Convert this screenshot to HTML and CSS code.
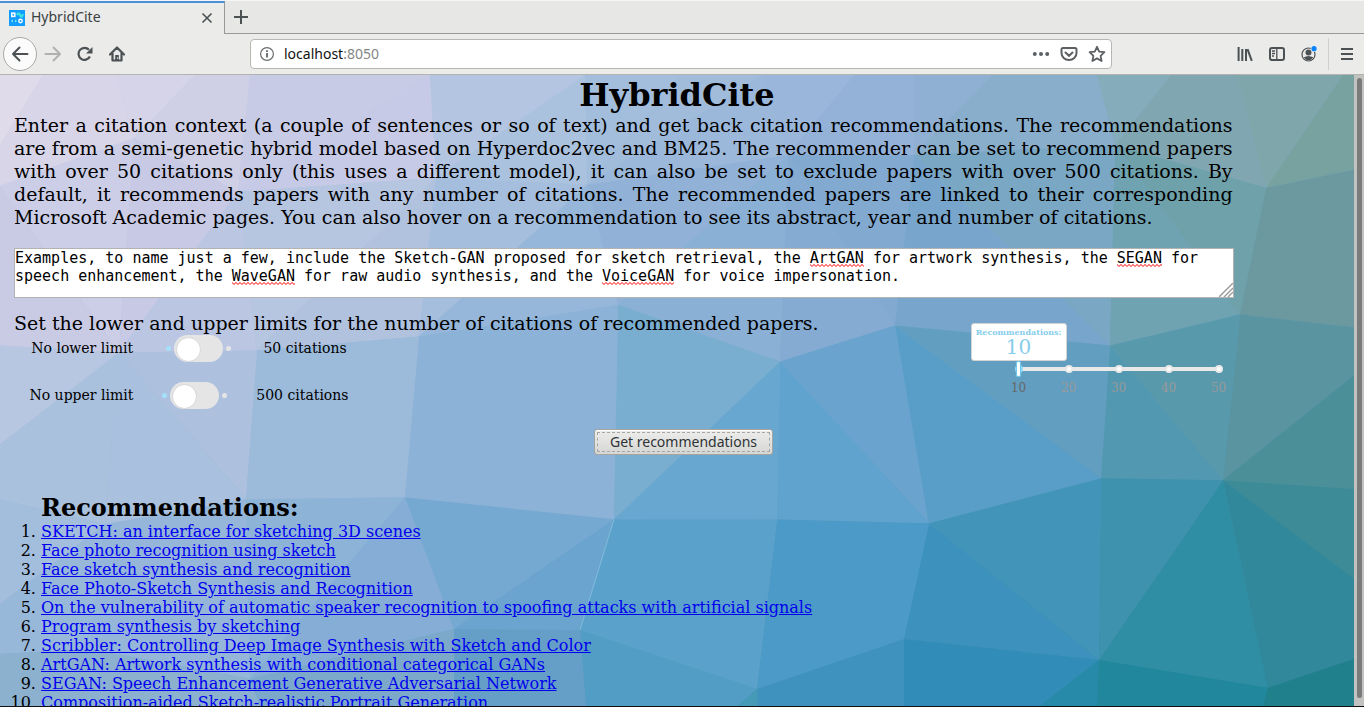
FILE: index.html
```html
<!DOCTYPE html>
<html lang="en">
<head>
<meta charset="utf-8">
<title>HybridCite</title>
<link rel="stylesheet" href="styles.css">
</head>
<body>
<div class="browser">
  <header class="chrome">
    <div class="tabs">
      <div class="tab">
        <svg class="favicon" viewBox="0 0 16 16" width="16" height="16"><rect width="16" height="16" fill="#119dff"/><rect x="2.8" y="3.2" width="3" height="3.2" fill="none" stroke="#fff" stroke-width="1.5"/><path d="M8 5q1.500-3.500 3 0t3-.8" fill="none" stroke="#3ee0dc" stroke-width="2.200"/><path d="M2 11l2-1.500v3zM8 11l-2-1.500v3z" fill="#7fe8ec"/><circle cx="11.500" cy="11" r="1.700" fill="none" stroke="#fff" stroke-width="1.400"/></svg>
        <span class="tab-title">HybridCite</span>
        <button class="icon-button small" aria-label="Close tab"><svg width="12" height="12" viewBox="0 0 12 12"><path d="M1.500 1.500l9 9M10.500 1.500l-9 9" stroke="#4c5154" stroke-width="1.600" fill="none"/></svg></button>
      </div>
      <div class="tab-rest"><button class="icon-button small" aria-label="New tab"><svg width="14" height="14" viewBox="0 0 14 14"><path d="M7 0v14M0 7h14" stroke="#4c5154" stroke-width="2"/></svg></button></div>
    </div>
    <nav class="toolbar">
      <button class="back" aria-label="Back"><svg width="18" height="16" viewBox="0 0 18 16"><path d="M8.500 1.500L2 8l6.500 6.500M2 8h14.500" fill="none" stroke="#4c5154" stroke-width="2" stroke-linejoin="round" stroke-linecap="round"/></svg></button>
      <button class="icon-button" aria-label="Forward"><svg width="18" height="16" viewBox="0 0 18 16"><path d="M9.500 1.500L16 8l-6.500 6.500M16 8H1.500" fill="none" stroke="#b0b2b2" stroke-width="2" stroke-linejoin="round" stroke-linecap="round"/></svg></button>
      <button class="icon-button" aria-label="Reload"><svg width="16" height="16" viewBox="0 0 16 16"><path d="M12.900 10.500A6 6 0 1 1 12 3.800" fill="none" stroke="#4c5154" stroke-width="2.200"/><path d="M15.500 1v6.500H9z" fill="#4c5154"/></svg></button>
      <button class="icon-button" aria-label="Home"><svg width="16" height="16" viewBox="0 0 16 16"><path d="M1 8.500L8 1.500l7 7M3.500 7.500v7h9v-7" fill="none" stroke="#4c5154" stroke-width="2.200" stroke-linejoin="round" stroke-linecap="round"/><path d="M6.200 9h3.600v6H6.200z" fill="#4c5154"/><circle cx="8.600" cy="12" r=".8" fill="#eee"/></svg></button>
      <div class="address">
        <svg width="16" height="16" viewBox="0 0 16 16"><circle cx="8" cy="8" r="6.400" fill="none" stroke="#6b6e70" stroke-width="1.200"/><path d="M8 7v4.500M8 4.200v1.700" stroke="#6b6e70" stroke-width="1.900"/></svg>
        <span class="url">localhost<span class="port">:8050</span></span>
        <svg width="18" height="16" viewBox="0 0 18 16" fill="#5c6063"><circle cx="2.800" cy="8" r="2"/><circle cx="9" cy="8" r="2"/><circle cx="15.200" cy="8" r="2"/></svg>
        <svg width="18" height="16" viewBox="0 0 18 16"><path d="M3 2h12q1.500 0 1.500 1.500V7a7.500 7 0 0 1-15 0V3.500Q1.500 2 3 2z" fill="none" stroke="#5c6063" stroke-width="2"/><path d="M5.500 6.500L9 9.800l3.500-3.300" fill="none" stroke="#5c6063" stroke-width="2" stroke-linecap="round"/></svg>
        <svg width="18" height="18" viewBox="0 0 18 18"><path d="M9 1.800l2.200 4.800 5.200.6-3.800 3.600 1 5.200L9 13.400 4.400 16l1-5.200L1.600 7.200l5.200-.6z" fill="none" stroke="#5c6063" stroke-width="1.800" stroke-linejoin="round"/></svg>
      </div>
      <button class="icon-button" aria-label="Library"><svg width="16" height="16" viewBox="0 0 16 16"><path d="M1.600 1v14M5.300 3v12M9 3v12M10.500 3.200l4.300 11.600" fill="none" stroke="#4c5154" stroke-width="2"/></svg></button>
      <button class="icon-button" aria-label="Sidebar"><svg width="16" height="16" viewBox="0 0 16 16"><rect x="1" y="2" width="14" height="12" rx="2" fill="none" stroke="#4c5154" stroke-width="2"/><path d="M7.800 2v12M3 5h3M3 7.500h3M3 10h2" stroke="#4c5154" stroke-width="1.300"/></svg></button>
      <button class="icon-button account" aria-label="Account"><svg width="16" height="16" viewBox="0 0 16 16"><circle cx="7.500" cy="8.500" r="6.500" fill="none" stroke="#4c5154" stroke-width="1.200"/><circle cx="7.500" cy="6.500" r="3" fill="#4c5154"/><path d="M2.600 11.500Q7.500 8.500 12.400 11.500 7.500 17 2.600 11.500z" fill="#4c5154"/><circle cx="13" cy="2.700" r="3.300" fill="#eaeae9"/><circle cx="13" cy="2.700" r="2.600" fill="#0a84ff"/></svg></button>
      <button class="icon-button menu" aria-label="Menu"><svg width="12" height="12" viewBox="0 0 12 12"><path d="M0 1h12M0 6h12M0 11h12" stroke="#4c5154" stroke-width="2"/></svg></button>
    </nav>
  </header>

  <div class="viewport">
    <div class="page">
      <svg class="backdrop" viewBox="0 75 1354 632" preserveAspectRatio="none" aria-hidden="true">
        <defs>
          <linearGradient id="g" x1="0" y1="0" x2="1" y2="1"><stop offset="0" stop-color="#d8d5e8"/><stop offset=".5" stop-color="#7faed3"/><stop offset="1" stop-color="#20808c"/></linearGradient>
          <pattern id="wave" width="4" height="3" patternUnits="userSpaceOnUse"><path d="M-1 0L2 3 5 0" transform="translate(0 -.5)" fill="none" stroke="#f00" stroke-width="1"/></pattern>
        </defs>
        <rect y="75" width="1354" height="632" fill="url(#g)"/>
        <path fill="#dfdbea" d="M0 75H43L0 145z"/>
        <path fill="#d8d5e8" d="M43 75H115L134 138 0 186V145z"/>
        <path fill="#d6d4e8" d="M115 75H195L134 138z"/>
        <path fill="#cfcfe6" d="M195 75H250L238 192 134 138z"/>
        <path fill="#c8cbe6" d="M250 75H430L238 192z"/>
        <path fill="#c6cae6" d="M430 75L436 178 238 192z"/>
        <path fill="#cccee7" d="M0 186L134 138 119 353z"/>
        <path fill="#c8c9e4" d="M134 138L238 192 119 353z"/>
        <path fill="#c9cbe5" d="M0 186L119 353 0 346z"/>
        <path fill="#b6c5e0" d="M238 192L436 178 257 351z"/>
        <path fill="#bbc6e2" d="M238 192L119 353 257 351z"/>
        <path fill="#b1c2df" d="M436 178L257 351 419 337z"/>
        <path fill="#b3c5e0" d="M430 75H585L436 178z"/>
        <path fill="#abc2de" d="M585 75L587 185 436 178z"/>
        <path fill="#a2bedc" d="M585 75H680L587 185z"/>
        <path fill="#a1bbdb" d="M680 75H762L587 185z"/>
        <path fill="#9bb8da" d="M762 75L788 155 587 185z"/>
        <path fill="#a5bedd" d="M436 178L587 185 419 337z"/>
        <path fill="#96b7da" d="M587 185L618 305 419 337z"/>
        <path fill="#91b1d7" d="M587 185L788 155 618 305z"/>
        <path fill="#8bb0d5" d="M788 155L780 362 618 305z"/>
        <path fill="#9ab6da" d="M762 75H854L788 155z"/>
        <path fill="#94b2d8" d="M854 75H914V155H788z"/>
        <path fill="#8fb0d2" d="M914 75H992L914 155z"/>
        <path fill="#89aecb" d="M992 75H1097L1115 145 914 155z"/>
        <path fill="#84acbb" d="M1097 75H1171L1115 145z"/>
        <path fill="#80a7b1" d="M1171 75H1236L1266 188 1115 145z"/>
        <path fill="#7ea6ab" d="M1236 75H1343L1266 188z"/>
        <path fill="#78a29f" d="M1343 75H1354V170L1266 188z"/>
        <path fill="#85abd3" d="M788 155L895 326 780 362z"/>
        <path fill="#82aad1" d="M788 155H914L895 326z"/>
        <path fill="#7aa7c3" d="M914 155L1115 145 1110 346z"/>
        <path fill="#78a5cb" d="M914 155L1110 346 895 326z"/>
        <path fill="#70a3b2" d="M1115 145L1240 315 1110 346z"/>
        <path fill="#6ea1a9" d="M1115 145L1266 188 1240 315z"/>
        <path fill="#6b999f" d="M1266 188L1354 170V328L1240 315z"/>
        <path fill="#5a94a1" d="M1240 315L1354 328V376L1223 481z"/>
        <path fill="#5398b1" d="M1110 346L1223 481 1101 479z"/>
        <path fill="#5999ac" d="M1110 346L1240 315 1223 481z"/>
        <path fill="#4b8f98" d="M1354 376V490L1223 481z"/>
        <path fill="#3d8b96" d="M1223 481L1354 490V580z"/>
        <path fill="#32889b" d="M1223 481L1354 580V660L1268 689z"/>
        <path fill="#2f8da4" d="M1223 481L1268 689 1099 661z"/>
        <path fill="#3e92ad" d="M1101 479L1223 481 1099 661z"/>
        <path fill="#4294b9" d="M929 524L1101 479 1099 661z"/>
        <path fill="#3c92bd" d="M929 524L1099 661 904 640z"/>
        <path fill="#318db8" d="M904 640L1099 661 1040 707H904z"/>
        <path fill="#278aa9" d="M1099 661L1097 707H1040z"/>
        <path fill="#20879c" d="M1099 661L1268 689 1263 707H1097z"/>
        <path fill="#20808b" d="M1268 689L1354 660V707H1263z"/>
        <path fill="#3e92bd" d="M757 690L904 640V707H758z"/>
        <path fill="#4c9ac7" d="M777 520L929 524 904 640 757 690z"/>
        <path fill="#5aa1cc" d="M614 520H777L757 690 580 631z"/>
        <path fill="#529dc5" d="M580 631L757 690 738 707H586z"/>
        <path fill="#459ab8" d="M757 690L758 707H738z"/>
        <path fill="#659ec7" d="M454 630L580 631 586 707H454z"/>
        <path fill="#6aa4cf" d="M614 520L580 631 454 630z"/>
        <path fill="#76a9d2" d="M405 498L614 520 454 630z"/>
        <path fill="#85add5" d="M405 498L454 630 250 680z"/>
        <path fill="#8db4d7" d="M246 500L405 498 250 680z"/>
        <path fill="#68a7cf" d="M780 362L777 520H614z"/>
        <path fill="#79aed1" d="M618 305L780 362 614 520z"/>
        <path fill="#8cb2d7" d="M419 337L618 305 614 520 405 498z"/>
        <path fill="#9cbada" d="M257 351L419 337 405 498 246 500z"/>
        <path fill="#adc0de" d="M119 353L257 351 246 500z"/>
        <path fill="#a9c0de" d="M119 353L246 500 105 525z"/>
        <path fill="#b8c7e1" d="M0 346L119 353 0 445z"/>
        <path fill="#a9c1dd" d="M0 445L119 353 105 525 0 500z"/>
        <path fill="#a3bddd" d="M0 500L105 525 0 605z"/>
        <path fill="#98b8da" d="M105 525L0 605V655L90 650z"/>
        <path fill="#95b6d9" d="M105 525L246 500 250 680 90 650z"/>
        <path fill="#8bb1cf" d="M0 655L90 650 250 680 260 707H0z"/>
        <path fill="#7ca9ca" d="M250 680L454 630V707H260z"/>
        <path fill="#60a3ce" d="M780 362L929 524 777 520z"/>
        <path fill="#69a3ce" d="M780 362L895 326 929 524z"/>
        <path fill="#589ec8" d="M895 326L1101 479 929 524z"/>
        <path fill="#629ebf" d="M895 326L1110 346 1101 479z"/>
        <path class="glint" d="M614 520L580 631"/>
      </svg>

      <main class="content">
        <h1>HybridCite</h1>
        <div class="column">
          <p class="intro">Enter a citation context (a couple of sentences or so of text) and get back citation recommendations. The recommendations are from a semi-genetic hybrid model based on Hyperdoc2vec and BM25. The recommender can be set to recommend papers with over 50 citations only (this uses a different model), it can also be set to exclude papers with over 500 citations. By default, it recommends papers with any number of citations. The recommended papers are linked to their corresponding Microsoft Academic pages. You can also hover on a recommendation to see its abstract, year and number of citations.</p>
          <div class="editor">
            <textarea aria-label="Citation context" spellcheck="false">Examples, to name just a few, include the Sketch-GAN proposed for sketch retrieval, the ArtGAN for artwork synthesis, the SEGAN for speech enhancement, the WaveGAN for raw audio synthesis, and the VoiceGAN for voice impersonation.</textarea>
            <svg class="typo artgan"><rect width="100%" height="3" fill="url(#wave)"/></svg>
            <svg class="typo segan"><rect width="100%" height="3" fill="url(#wave)"/></svg>
            <svg class="typo wavegan"><rect width="100%" height="3" fill="url(#wave)"/></svg>
            <svg class="typo voicegan"><rect width="100%" height="3" fill="url(#wave)"/></svg>
            <svg class="grip" width="14" height="14" viewBox="0 0 14 14"><path d="M0 14L14 0M5 14l9-9M9 14l5-5" stroke="#999" stroke-width="1.400"/></svg>
          </div>
          <div class="settings">
            <section class="limits">
              <p>Set the lower and upper limits for the number of citations of recommended papers.</p>
              <div class="limit"><label for="lower">No lower limit</label><span class="switch"><input type="checkbox" id="lower"></span><label for="lower">50 citations</label></div>
              <div class="limit"><label for="upper">No upper limit</label><span class="switch"><input type="checkbox" id="upper"></span><label for="upper">500 citations</label></div>
            </section>
            <section class="amount">
              <div class="bubble"><label for="count">Recommendations:</label><output for="count">10</output></div>
              <div class="slider">
                <div class="stops"><i></i><i></i><i></i><i></i><i></i></div>
                <input type="range" id="count" min="10" max="50" step="10" value="10">
              </div>
              <div class="marks"><span class="current">10</span><span>20</span><span>30</span><span>40</span><span>50</span></div>
            </section>
          </div>
        </div>
        <div class="submit"><button class="get">Get recommendations</button></div>
        <section class="results">
          <h2>Recommendations:</h2>
          <ol>
            <li><a href="#">SKETCH: an interface for sketching 3D scenes</a></li>
            <li><a href="#">Face photo recognition using sketch</a></li>
            <li><a href="#">Face sketch synthesis and recognition</a></li>
            <li><a href="#">Face Photo-Sketch Synthesis and Recognition</a></li>
            <li><a href="#">On the vulnerability of automatic speaker recognition to spoofing attacks with artificial signals</a></li>
            <li><a href="#">Program synthesis by sketching</a></li>
            <li><a href="#">Scribbler: Controlling Deep Image Synthesis with Sketch and Color</a></li>
            <li><a href="#">ArtGAN: Artwork synthesis with conditional categorical GANs</a></li>
            <li><a href="#">SEGAN: Speech Enhancement Generative Adversarial Network</a></li>
            <li><a href="#">Composition-aided Sketch-realistic Portrait Generation.</a></li>
          </ol>
        </section>
      </main>
    </div>
    <div class="scrollbar"><div class="thumb"></div></div>
  </div>
</div>
</body>
</html>
```
FILE: styles.css
```css
* { box-sizing: border-box; }
body { margin: 0; font-family: "DejaVu Serif", serif; color: #000; }
button { font: inherit; border: 0; padding: 0; background: none; }
p, h1, h2, ol { margin: 0; padding: 0; }

.browser { height: 100vh; display: flex; flex-direction: column; overflow: hidden; border-bottom: 1px solid #111; }

/* Browser chrome */
.chrome { background: #ebebea; font-family: "Noto Sans", sans-serif; font-size: 14px; color: #3a3f42; border-bottom: 1px solid #b3b3b0; border-top: 1px solid #f6f6f6; }
.tabs { display: flex; height: 33px; }
.tab { width: 225px; display: flex; align-items: center; gap: 6px; padding: 0 7px 2px 9px; border-top: 2px solid #4a90d9; border-right: 1px solid #999; }
.tab-title { flex: 1; line-height: 18px; padding-bottom: 2px; }
.tab-rest { flex: 1; display: flex; align-items: center; padding-left: 6px; background: #e7e7e5; border-bottom: 1px solid #999; }
.icon-button { width: 32px; height: 32px; display: grid; place-items: center; flex: none; }
.icon-button.small { width: 20px; height: 20px; }
.toolbar { display: flex; align-items: center; height: 40px; padding: 0 0 0 3px; }
.back { width: 34px; height: 34px; flex: none; display: grid; place-items: center; border: 1px solid #a9a9a7; border-radius: 50%; background: #fbfbfb; }
.address { flex: 1; height: 30px; display: flex; align-items: center; gap: 10px; padding: 0 5px 0 8px; margin: 0 117px; background: #fff; border: 1px solid #b6b6b3; border-radius: 4px; }
.url { flex: 1; color: #111; margin-left: -1px; padding-bottom: 2px; }
.port { color: #858585; }
.menu { width: 36px; border-left: 1px solid #cfcfcd; }
.account { margin-right: 3px; }

/* Page */
.viewport { flex: 1; min-height: 0; display: flex; }
.page { flex: 1; min-width: 0; position: relative; overflow: hidden; }
.backdrop { position: absolute; inset: 0; width: 100%; height: 100%; }
.glint { stroke: #8cc6df; stroke-width: 1; opacity: .7; fill: none; }
.content { position: relative; padding: 1px 0 0 0; }
.scrollbar { width: 10px; background: #c2c2c0; padding: 3px 2px 8px 3px; }
.thumb { height: 100%; border-radius: 3px; background: #7a7c7c; }

h1 { font-size: 32px; line-height: 38px; text-align: center; }
.column { width: 90%; margin-left: 14px; }
.intro, .limits p { font-size: 19px; line-height: 23px; }
.intro { text-align: justify; }

.editor { position: relative; margin: 19px -1px 14px 0; display: flex; font: 15px/18px "DejaVu Sans Mono", monospace; }
.editor textarea { flex: 1; height: 50px; margin: 0; padding: 0; border: 1px solid #b3b3b3; background: #fff; color: #000; font: inherit; resize: none; overflow: hidden; }
.typo { position: absolute; height: 3px; }
.artgan { left: calc(1px + 88ch); width: 6ch; top: 16px; }
.segan { left: calc(1px + 122ch); width: 5ch; top: 16px; }
.wavegan { left: calc(1px + 24ch); width: 7ch; top: 34px; }
.voicegan { left: calc(1px + 65ch); width: 8ch; top: 34px; }
.grip { position: absolute; right: 1px; bottom: 1px; }

.settings { display: flex; justify-content: space-between; align-items: flex-start; }
.limit { width: 348px; height: 27px; margin: 0 0 20px 1px; display: flex; align-items: center; justify-content: space-around; font-size: 14px; }
.limit label { padding-bottom: 2px; }
.limits p { }
.switch { display: flex; align-items: center; gap: 3px; }
.switch::before, .switch::after { content: ""; width: 5px; height: 5px; border-radius: 50%; background: #e5e5e5; }
.switch::before { background: #a6e0fc; }
.switch input { appearance: none; width: 49px; height: 27px; margin: 0; padding: 2px; border-radius: 14px; background: #e5e5e5; }
.switch input::before { content: ""; display: block; width: 23px; height: 23px; border-radius: 50%; background: #fff; border: 1px solid #d6d6d6; }

.amount { width: 262px; padding: 11px 14px 0 0; }
.bubble { width: 96px; height: 38px; display: flex; flex-direction: column; align-items: center; padding-top: 4px; background: #fff; border: 1px solid #d3d3d3; border-radius: 3px; color: #87ceeb; }
.bubble label { font-size: 8px; line-height: 8px; font-weight: bold; }
.bubble output { font-size: 20px; line-height: 23px; }
.slider { position: relative; height: 16px; margin-left: 48px; }
.slider input { appearance: none; position: absolute; left: -3px; top: 0; width: 206px; height: 16px; margin: 0; background: none; }
.slider input::-webkit-slider-thumb { appearance: none; width: 5px; height: 16px; border: 1px solid #6fc8ea; border-radius: 2px; background: #fff; box-shadow: 0 0 1px #6fc8ea; }
.stops { display: flex; justify-content: space-between; align-items: center; height: 16px; margin: 0 -4px; background: linear-gradient(#e9e9e9, #e9e9e9) center / calc(100% - 8px) 4px no-repeat; }
.stops i { width: 8px; height: 8px; border: 2px solid #e9e9e9; border-radius: 50%; background: #fff; }
.stops i:first-child { border-color: #96dbfa; }
.marks { display: flex; justify-content: space-between; margin: 4px -12px 0 36px; font-size: 12px; line-height: 14px; color: #999; }
.marks span { width: 24px; text-align: center; }
.marks .current { color: #666; }

.submit { display: flex; justify-content: center; padding-left: 13px; }
.get { width: 179px; height: 26px; padding-bottom: 2px; font: 14px "Noto Sans", sans-serif; color: #2e3436; border: 1px solid #a7a39e; border-radius: 3px; background: linear-gradient(#ededec, #d6d6d4); box-shadow: inset 0 1px #fff; outline: 1px dashed #a6a6a4; outline-offset: -4px; }

.results { padding: 39px 0 0 41px; }
h2 { font-size: 24px; line-height: 28px; }
ol { font-size: 16px; line-height: 19px; }
li a { color: #00e; }
```
